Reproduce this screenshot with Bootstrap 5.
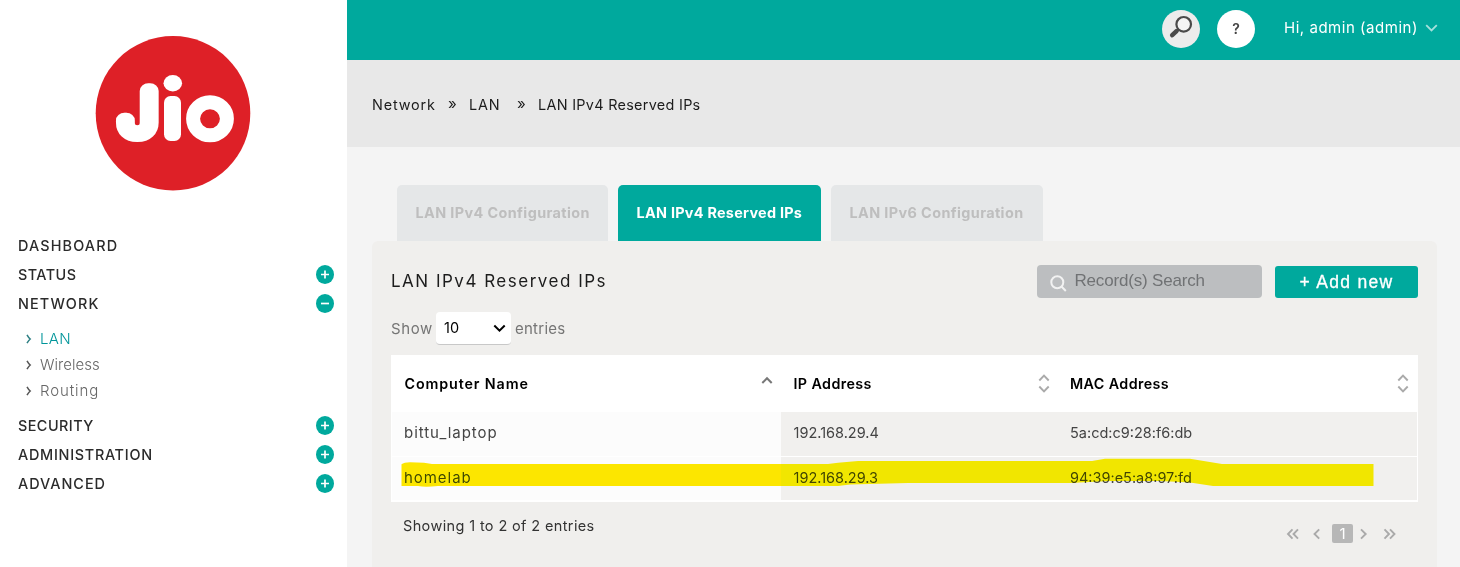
<!DOCTYPE html>
<html lang="en">
<head>
<meta charset="utf-8">
<meta name="viewport" content="width=device-width, initial-scale=1">
<title>LAN IPv4 Reserved IPs</title>
<link href="https://cdn.jsdelivr.net/npm/bootstrap@5.3.0/dist/css/bootstrap.min.css" rel="stylesheet">
<style>
:root{--teal:#00a99d}
body{font-family:Inter,"Open Sans",sans-serif;font-size:14px;line-height:20px;color:#222;background:#f4f4f4;height:567px;overflow:hidden}
a{color:inherit;text-decoration:none}
svg{display:block;flex:none}
.side{width:347px;height:567px;padding:35px 13px 0 18px}
.brand-logo{margin-left:77px;margin-bottom:39px}
.menu-item{height:29px;font-size:14.4px;font-weight:500;color:#2b2b2b;letter-spacing:1.15px}
.ls-status{letter-spacing:.45px}.ls-admin{letter-spacing:.72px}
.sub-menu{padding:8px 0 7px 8px}
.sub-item{height:26px;font-size:15px;font-weight:300;color:#666;gap:8px}
.sub-item svg{margin-top:-1px}
.sub-item.current{color:#00959a}
.topbar{height:60px;background:var(--teal);padding:0 22px 3px 0;color:#fff}
.round-btn{width:38px;height:38px;border-radius:50%;background:#fff;color:#444;font-weight:600;font-size:14px}
.round-btn.grey{background:#ececec;margin-right:17px}
.user-menu{font-size:15px;letter-spacing:.53px;margin-left:29px;gap:7px;padding-bottom:1px}
.crumbs{height:87px;background:#e8e8e8;padding:2px 25px 0;color:#1c1c1c;font-size:14.4px;letter-spacing:.3px}
.crumbs .raq{letter-spacing:0;font-size:15px;line-height:16px;margin-top:-1px}
.tab-strip{padding:38px 0 0 50px;gap:10px}
.tab-item{height:56px;border-radius:5px 5px 0 0;background:#e5e7e8;color:#bebebe;font-size:14.4px;font-weight:700;letter-spacing:.4px;width:211px;padding-left:18.5px}
.tab-item.current{background:var(--teal);color:#fff;width:203px;letter-spacing:.28px}
.tab-item:last-child{width:212px}
.panel{width:1065px;height:330px;margin-left:25px;background:#f0efed;border-radius:6px 6px 0 0;padding:24px 19px 0}
.panel-title{font-size:17px;line-height:32px;letter-spacing:1.5px;font-weight:400;margin:0;color:#1c1c1c}
.search-box{width:225px;height:33px;border-radius:4px;background:#bcbec0;color:#707274;font:17px/31px "Liberation Sans",sans-serif;letter-spacing:-.18px;padding-left:13px;gap:7.500px}
.search-box svg{margin-top:4px}
.search-box span{padding-bottom:2px}
.add-btn{width:143px;height:32px;margin:1px 0 0 13px;border-radius:3px;background:var(--teal);color:#fff;border:0;padding:0;font:17.5px/32px "Liberation Sans",sans-serif;letter-spacing:1.3px;-webkit-text-stroke:.3px #fff}
.length-row{margin-top:14px;height:33px;font-size:15px;color:#757575}
.len-select{width:75px;height:33px;margin:0 4px;background:#fff;border-radius:4px;border-bottom:1px solid #c8c8c8;color:#000;padding:0 5px 0 8px;font-size:14.5px}
.grid-wrap{margin-top:10px;width:1027px}
.data-grid{border:1px solid #fff;border-top:0;display:grid;grid-template-columns:389px 276.500px 359.500px;width:1027px}
.head-cell{height:57px;background:#fff;color:#000;font-size:14.3px;font-weight:600;padding:0 8px 0 12.500px}
.body-cell{height:44.5px;font-size:14.5px;color:#444;background:#f1f0ee;border-bottom:1px solid #fff;padding:0 0 1px 12.500px}
.data-grid .body-cell:nth-last-child(-n+3){padding-bottom:0}
.body-cell.sorted{background:#fcfcfc;font-size:15px;letter-spacing:.95px;padding-left:12px}
.marker{position:absolute;left:0;top:100px;mix-blend-mode:darken;pointer-events:none}
.foot-row{padding:14px 21px 0 12px}
.foot-row .info{font-size:14.5px;letter-spacing:.37px;color:#333}
.pager{margin-top:8px}
.pager .cur{width:21px;height:19px;border-radius:2px;background:#b7b7b7;color:#fff;font-size:15px;line-height:19px}
</style>
</head>
<body class="d-flex">
<aside class="side bg-white flex-shrink-0">
  <svg class="brand-logo" width="156" height="157" viewBox="95 35 156 157" role="img" aria-label="Jio">
    <circle cx="173" cy="113.300" r="77.300" fill="#de2027"/>
    <g fill="#fff" stroke="#fff" stroke-linejoin="round" font-family="Inter" font-weight="100">
      <text transform="translate(119.600 133.700) scale(1.120 1)" font-size="59" stroke-width="15.500">J</text>
      <rect x="164" y="96" width="17" height="45" rx="6.500" stroke="none"/>
      <ellipse cx="172.800" cy="83.300" rx="9.300" ry="8.200" stroke="none"/>
      <ellipse cx="210" cy="118.800" rx="16.900" ry="16.500" fill="none" stroke-width="14"/>
    </g>
  </svg>
  <nav>
    <div class="menu-item d-flex align-items-center"><a href="#">DASHBOARD</a></div>
    <div class="menu-item d-flex align-items-center justify-content-between"><a href="#" class="ls-status">STATUS</a><svg width="18" height="19" viewBox="0 0 18 19"><ellipse cx="9" cy="9.500" rx="9" ry="9.500" fill="#00a99d"/><path d="M5 9.500h8M9 5.500v8" stroke="#fff" stroke-width="1.700"/></svg></div>
    <div class="menu-item d-flex align-items-center justify-content-between"><a href="#">NETWORK</a><svg width="18" height="19" viewBox="0 0 18 19"><ellipse cx="9" cy="9.500" rx="9" ry="9.500" fill="#00a99d"/><path d="M5 9.500h8" stroke="#fff" stroke-width="1.700"/></svg></div>
    <div class="sub-menu">
      <a href="#" class="sub-item current d-flex align-items-center"><svg width="6" height="10" viewBox="0 0 6 10"><path d="M1 .8Q2.500 3.500 4.200 5 2.500 6.500 1 9.200" fill="none" stroke="#2d7f83" stroke-width="1.500"/></svg><span style="letter-spacing:.4px">LAN</span></a>
      <a href="#" class="sub-item d-flex align-items-center"><svg width="6" height="10" viewBox="0 0 6 10"><path d="M1 .8Q2.500 3.500 4.200 5 2.500 6.500 1 9.200" fill="none" stroke="#555" stroke-width="1.500"/></svg><span style="letter-spacing:.05px">Wireless</span></a>
      <a href="#" class="sub-item d-flex align-items-center"><svg width="6" height="10" viewBox="0 0 6 10"><path d="M1 .8Q2.500 3.500 4.200 5 2.500 6.500 1 9.200" fill="none" stroke="#555" stroke-width="1.500"/></svg><span style="letter-spacing:.9px">Routing</span></a>
    </div>
    <div class="menu-item d-flex align-items-center justify-content-between"><a href="#" class="ls-status">SECURITY</a><svg width="18" height="19" viewBox="0 0 18 19"><ellipse cx="9" cy="9.500" rx="9" ry="9.500" fill="#00a99d"/><path d="M5 9.500h8M9 5.500v8" stroke="#fff" stroke-width="1.700"/></svg></div>
    <div class="menu-item d-flex align-items-center justify-content-between"><a href="#" class="ls-admin">ADMINISTRATION</a><svg width="18" height="19" viewBox="0 0 18 19"><ellipse cx="9" cy="9.500" rx="9" ry="9.500" fill="#00a99d"/><path d="M5 9.500h8M9 5.500v8" stroke="#fff" stroke-width="1.700"/></svg></div>
    <div class="menu-item d-flex align-items-center justify-content-between"><a href="#" style="letter-spacing:1px">ADVANCED</a><svg width="18" height="19" viewBox="0 0 18 19"><ellipse cx="9" cy="9.500" rx="9" ry="9.500" fill="#00a99d"/><path d="M5 9.500h8M9 5.500v8" stroke="#fff" stroke-width="1.700"/></svg></div>
  </nav>
</aside>
<main class="flex-grow-1">
  <header class="topbar d-flex align-items-center justify-content-end">
    <a href="#" class="round-btn grey d-flex align-items-center justify-content-center" aria-label="Search"><svg width="38" height="38" viewBox="0 0 38 38"><circle cx="21.700" cy="14.300" r="7.300" fill="#f4f4f4" stroke="#4a4a4a" stroke-width="2.200"/><path d="M16.300 19.500l-2 2" stroke="#4a4a4a" stroke-width="2.500"/><path d="M14.500 21.200l-4.300 4" stroke="#4a4a4a" stroke-width="4.500" stroke-linecap="round"/></svg></a>
    <a href="#" class="round-btn d-flex align-items-center justify-content-center">?</a>
    <a href="#" class="user-menu d-flex align-items-center"><span>Hi, admin (admin)</span><svg width="13" height="8" viewBox="0 0 13 8"><path d="M1.200 1.200L6.500 6.500l5.300-5.300" fill="none" stroke="#a5e0dc" stroke-width="1.800"/></svg></a>
  </header>
  <nav class="crumbs d-flex align-items-center" aria-label="breadcrumb">
    <span style="letter-spacing:.85px;width:76px">Network</span><span class="raq" style="width:21px">»</span><span style="letter-spacing:.9px;width:48px">LAN</span><span class="raq" style="width:21px">»</span><span>LAN IPv4 Reserved IPs</span>
  </nav>
  <div class="tab-strip d-flex">
    <a href="#" class="tab-item d-flex align-items-center">LAN IPv4 Configuration</a>
    <a href="#" class="tab-item current d-flex align-items-center">LAN IPv4 Reserved IPs</a>
    <a href="#" class="tab-item d-flex align-items-center">LAN IPv6 Configuration</a>
  </div>
  <section class="panel">
    <div class="d-flex align-items-start">
      <h1 class="panel-title me-auto">LAN IPv4 Reserved IPs</h1>
      <div class="search-box d-flex align-items-center"><svg width="17" height="17" viewBox="0 0 17 17"><circle cx="7.300" cy="7.300" r="6" fill="none" stroke="#f2f2f2" stroke-width="2"/><path d="M11.500 11.500l4.300 4.500" stroke="#f2f2f2" stroke-width="2"/></svg><span>Record(s) Search</span></div>
      <button type="button" class="add-btn btn">+ Add new</button>
    </div>
    <div class="length-row d-flex align-items-center"><span style="letter-spacing:.6px;width:41px">Show</span><div class="len-select d-flex align-items-center justify-content-between"><span>10</span><svg width="13" height="9" viewBox="0 0 13 9"><path d="M1.300 1.500L6.500 6.700l5.200-5.200" fill="none" stroke="#000" stroke-width="2"/></svg></div><span style="letter-spacing:.25px">entries</span></div>
    <div class="grid-wrap position-relative">
      <div class="data-grid">
        <div class="head-cell d-flex align-items-center justify-content-between"><span style="letter-spacing:.88px">Computer Name</span><svg width="12" height="20" viewBox="0 0 12 20"><path d="M1.300 9L6 4.200 10.700 9" fill="none" stroke="#777" stroke-width="2"/></svg></div>
        <div class="head-cell d-flex align-items-center justify-content-between"><span style="letter-spacing:.4px">IP Address</span><svg width="12" height="20" viewBox="0 0 12 20"><path d="M1.300 6.500L6 1.700l4.700 4.800M1.300 12.500L6 17.300l4.700-4.800" fill="none" stroke="#aaa" stroke-width="1.900"/></svg></div>
        <div class="head-cell d-flex align-items-center justify-content-between"><span style="letter-spacing:.4px">MAC Address</span><svg width="12" height="20" viewBox="0 0 12 20"><path d="M1.300 6.500L6 1.700l4.700 4.800M1.300 12.500L6 17.300l4.700-4.800" fill="none" stroke="#aaa" stroke-width="1.900"/></svg></div>
        <div class="body-cell sorted d-flex align-items-center">bittu_laptop</div>
        <div class="body-cell d-flex align-items-center">192.168.29.4</div>
        <div class="body-cell d-flex align-items-center">5a:cd:c9:28:f6:db</div>
        <div class="body-cell sorted d-flex align-items-center">homelab</div>
        <div class="body-cell d-flex align-items-center">192.168.29.3</div>
        <div class="body-cell d-flex align-items-center">94:39:e5:a8:97:fd</div>
      </div>
      <svg class="marker" width="1027" height="40" viewBox="391 455 1027 40"><path d="M401.500 464.200Q404 462.500 410 462.300L424 462.700 432 464H828L838 462.800 858 461H1092L1105 458.800H1190L1222 464H1373.500V486H1213L1190 482.500 1160 481 1110 481 1070 483H908L850 484.500 838 486H438Q425 487.300 418 486H401.500Z" fill="#ffe600"/></svg>
    </div>
    <div class="foot-row d-flex align-items-start justify-content-between">
      <span class="info">Showing 1 to 2 of 2 entries</span>
      <div class="pager d-flex align-items-center">
        <svg width="46" height="12" viewBox="0 0 46 12"><path d="M6.500 1.300L2 6l4.500 4.700M12 1.300L7.500 6l4.500 4.700M33.200 1.300L28.500 6l4.700 4.700" fill="none" stroke="#aaa" stroke-width="1.900"/></svg>
        <span class="cur text-center">1</span>
        <svg width="44" height="12" viewBox="0 0 44 12"><path d="M8 1.300L12.700 6 8 10.700M31.500 1.300L36 6l-4.500 4.700M37 1.300L41.500 6 37 10.700" fill="none" stroke="#aaa" stroke-width="1.900"/></svg>
      </div>
    </div>
  </section>
</main>
<script src="https://cdn.jsdelivr.net/npm/bootstrap@5.3.0/dist/js/bootstrap.bundle.min.js"></script>
</body>
</html>
